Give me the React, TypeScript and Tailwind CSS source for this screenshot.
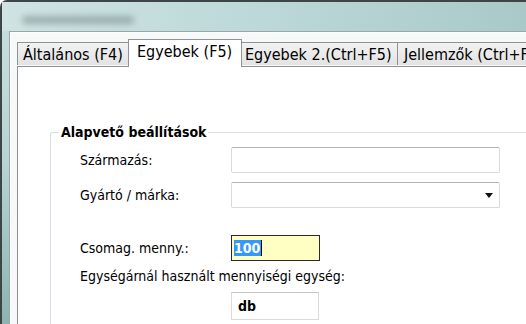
import React from "react";

const font = { fontFamily: '"DejaVu Sans Condensed", "DejaVu Sans", Tahoma, sans-serif' };

export default function App() {
  return (
    <div
      className="relative w-[526px] h-[324px] overflow-hidden bg-white text-[14px] text-black"
      style={font}
    >
      {/* window frame */}
      <div className="flex flex-col w-full h-full rounded-tl-[7px] border-l-2 border-t-2 border-[#3d4546] bg-gradient-to-b from-[#c9dfdf] via-[#b7d3d3] to-[#8db3b3]">
        {/* title bar */}
        <div className="h-[29px] shrink-0 flex items-center pl-[20px] bg-gradient-to-r from-[#cfe3e3] via-[#bcd8d8] to-[#a9c9c9]">
          <div className="mt-[6px] h-[8px] w-[112px] rounded bg-[#7d8d8e] opacity-60 blur-[3px]" />
        </div>
        {/* client area */}
        <div className="flex-1 flex ml-[7px] border-l border-t border-[#9aa7aa] bg-[#f7f8f8] shadow-[inset_1px_1px_0_#fdfdfd]">
          <div className="flex-1 flex flex-col pt-[7px] pl-[7px]">
            {/* tabs */}
            <div className="flex items-end h-[27px] shrink-0 relative z-10 text-[16px]">
              <div className="h-[23px] w-[111px] mb-[1px] flex items-center pl-[5px] pt-[2px] border border-r-0 border-b-0 border-[#8e9198] bg-gradient-to-b from-[#f2f2f2] to-[#e3e3e3] whitespace-nowrap">
                Általános (F4)
              </div>
              <div className="h-[28px] w-[114px] -mb-[1px] flex items-center pl-[8px] pb-[3px] border border-b-0 border-[#8e9198] bg-white whitespace-nowrap">
                Egyebek (F5)
              </div>
              <div className="h-[23px] w-[155px] mb-[1px] flex items-center pl-[3px] pt-[2px] border-t border-[#8e9198] bg-gradient-to-b from-[#f2f2f2] to-[#e3e3e3] whitespace-nowrap overflow-hidden">
                Egyebek 2.(Ctrl+F5)
              </div>
              <div className="h-[23px] w-[140px] mb-[1px] flex items-center pl-[6px] pt-[2px] border border-r-0 border-b-0 border-[#8e9198] bg-gradient-to-b from-[#f2f2f2] to-[#e3e3e3] whitespace-nowrap">
                Jellemzők (Ctrl+F6)
              </div>
            </div>
            {/* panel */}
            <div className="flex-1 border-l border-t border-[#8e9198] bg-white pl-[32px] pt-[65px]">
              {/* group box */}
              <div className="relative h-[300px] rounded-tl-[3px] border-l border-t border-[#d5dfe5] pl-[29px] pt-[14px]">
                <div className="absolute -top-[9px] left-[8px] bg-white px-[2px] font-bold leading-[16px] whitespace-nowrap">
                  Alapvető beállítások
                </div>
                <div className="flex items-center h-[26px]">
                  <div className="w-[151px]">Származás:</div>
                  <div className="h-[26px] w-[269px] rounded-[2px] border border-[#dadada] border-t-[#b4b4b4] bg-white" />
                </div>
                <div className="flex items-center h-[26px] mt-[9px]">
                  <div className="w-[151px]">Gyártó / márka:</div>
                  <div className="h-[26px] w-[269px] rounded-[2px] border border-[#dadada] border-t-[#b4b4b4] bg-white flex items-center justify-end pr-[6px]">
                    <svg width="8" height="5" viewBox="0 0 8 5">
                      <path d="M0 0H8L4 5Z" fill="#111" />
                    </svg>
                  </div>
                </div>
                <div className="flex items-center h-[26px] mt-[27px]">
                  <div className="w-[151px]">Csomag. menny.:</div>
                  <div className="h-[26px] w-[89px] border border-[#2a2a2a] bg-[#ffffc4] flex items-center pl-[2px]">
                    <span className="bg-[#3399ff] text-white font-bold leading-[16px] pr-[1px]">100</span>
                    <span className="w-[1px] h-[16px] bg-black" />
                  </div>
                </div>
                <div className="mt-[7px] leading-[16px] whitespace-nowrap">
                  Egységárnál használt mennyiségi egység:
                </div>
                <div className="flex items-center h-[28px] mt-[8px]">
                  <div className="w-[151px]" />
                  <div className="h-[28px] w-[88px] border border-[#dadada] border-t-[#c4c4c4] bg-white flex items-center pl-[6px] font-bold">
                    db
                  </div>
                </div>
              </div>
            </div>
          </div>
        </div>
      </div>
    </div>
  );
}
